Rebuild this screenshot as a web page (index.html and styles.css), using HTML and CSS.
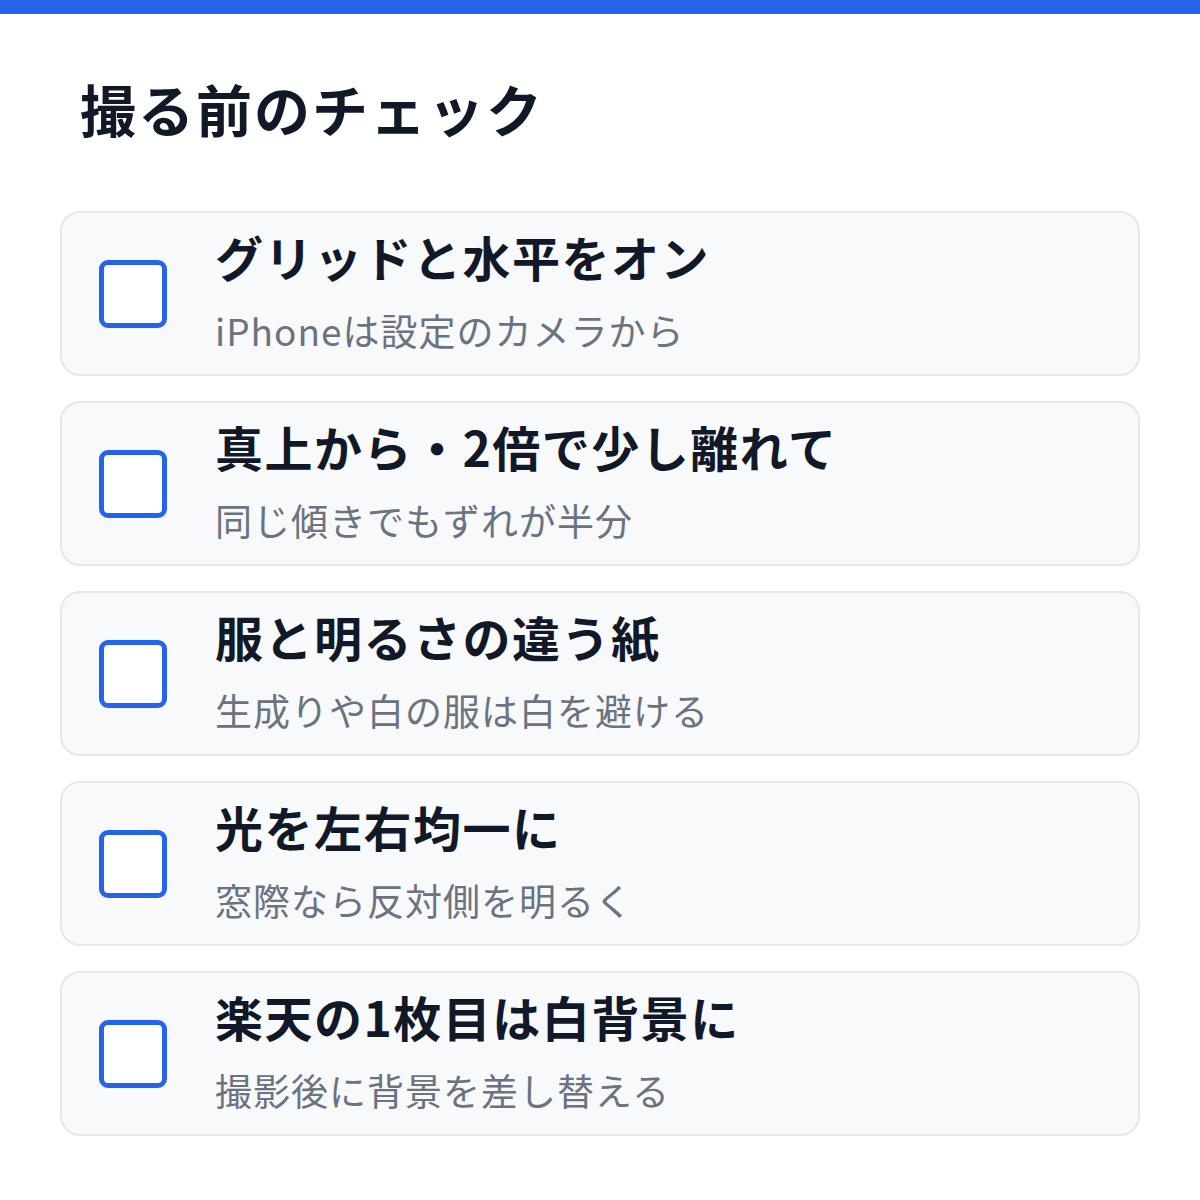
FILE: index.html
```html
<!DOCTYPE html>
<html lang="ja">
<head>
    <meta charset="UTF-8">
    <meta name="viewport" content="width=device-width, initial-scale=1.0">
    <title>撮る前のチェック</title>
    <link rel="stylesheet" href="styles.css">
</head>
<body>
    <div class="top-bar"></div>
    <main class="page">
        <h1 class="page-title">撮る前のチェック</h1>

        <ul class="check-list">
            <li class="check-item">
                <span class="check-box"></span>
                <div class="check-text">
                    <div class="check-title">グリッドと水平をオン</div>
                    <div class="check-note">iPhoneは設定のカメラから</div>
                </div>
            </li>
            <li class="check-item">
                <span class="check-box"></span>
                <div class="check-text">
                    <div class="check-title">真上から・2倍で少し離れて</div>
                    <div class="check-note">同じ傾きでもずれが半分</div>
                </div>
            </li>
            <li class="check-item">
                <span class="check-box"></span>
                <div class="check-text">
                    <div class="check-title">服と明るさの違う紙</div>
                    <div class="check-note">生成りや白の服は白を避ける</div>
                </div>
            </li>
            <li class="check-item">
                <span class="check-box"></span>
                <div class="check-text">
                    <div class="check-title">光を左右均一に</div>
                    <div class="check-note">窓際なら反対側を明るく</div>
                </div>
            </li>
            <li class="check-item">
                <span class="check-box"></span>
                <div class="check-text">
                    <div class="check-title">楽天の1枚目は白背景に</div>
                    <div class="check-note">撮影後に背景を差し替える</div>
                </div>
            </li>
        </ul>
    </main>
</body>
</html>
```

FILE: styles.css
```css
body {
    margin: 0;
    background-color: #fff;
    color: #111827;
    font-family: "Noto Sans CJK JP", "Noto Sans", sans-serif;
}

.top-bar {
    height: 14px;
    background-color: #2563eb;
}

.page {
    padding: 0 60px;
}

.page-title {
    margin: 55px 0 64px 20px;
    font-size: 56px;
    line-height: 78px;
    font-weight: 700;
    letter-spacing: 2px;
}

.check-list {
    list-style: none;
    margin: 0;
    padding: 0;
    display: flex;
    flex-direction: column;
    gap: 25px;
}

.check-item {
    display: flex;
    align-items: center;
    height: 165px;
    box-sizing: border-box;
    padding: 0 37px;
    background: #f8f9fb;
    border: 2px solid #e5e7eb;
    border-radius: 20px;
}

    .check-box {
        flex: none;
        width: 68px;
        height: 68px;
        box-sizing: border-box;
        border: 5px solid #2563eb;
        border-radius: 9px;
        background: #fff;
        margin-right: 48px;
    }

.check-text {
    display: flex;
    flex-direction: column;
    gap: 16px;
    padding-bottom: 7px;
}

.check-title {
    font-size: 48px;
    line-height: 64px;
    font-weight: 700;
    letter-spacing: 1.5px;
}

.check-note {
    font-size: 37px;
    line-height: 52px;
    color: #6b7280;
    letter-spacing: 1px;
}
```
